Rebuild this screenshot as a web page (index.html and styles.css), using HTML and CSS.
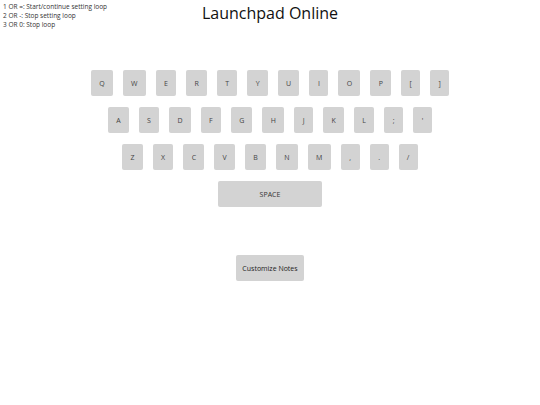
FILE: index.html
```html
<!DOCTYPE html>
<html>
<head>
<meta charset="utf-8">
<title>Launchpad Online</title>
<link rel="stylesheet" href="styles.css">
</head>
<body>
<header class="header">
  <div class="help">
    <div>1 OR =: Start/continue setting loop</div>
    <div>2 OR -: Stop setting loop</div>
    <div>3 OR 0: Stop loop</div>
  </div>
  <h1 class="title">Launchpad Online</h1>
  <div></div>
</header>
<main class="keyboard">
  <div class="row">
    <button class="key">Q</button><button class="key">W</button><button class="key">E</button><button class="key">R</button><button class="key">T</button><button class="key">Y</button><button class="key">U</button><button class="key">I</button><button class="key">O</button><button class="key">P</button><button class="key">[</button><button class="key">]</button>
  </div>
  <div class="row">
    <button class="key">A</button><button class="key">S</button><button class="key">D</button><button class="key">F</button><button class="key">G</button><button class="key">H</button><button class="key">J</button><button class="key">K</button><button class="key">L</button><button class="key">;</button><button class="key">'</button>
  </div>
  <div class="row">
    <button class="key">Z</button><button class="key">X</button><button class="key">C</button><button class="key">V</button><button class="key">B</button><button class="key">N</button><button class="key">M</button><button class="key">,</button><button class="key">.</button><button class="key">/</button>
  </div>
  <div class="row">
    <button class="key space">SPACE</button>
  </div>
</main>
<div class="actions">
  <button class="custom">Customize Notes</button>
</div>
</body>
</html>
```
FILE: styles.css
```css
html, body {
  margin: 0;
  padding: 0;
  background: #ffffff;
  font-family: "Open Sans", "Noto Sans", sans-serif;
  color: #222;
}
.header {
  display: grid;
  grid-template-columns: 1fr auto 1fr;
  align-items: start;
}
.help {
  padding: 2px 0 0 3px;
  font-size: 6.5px;
  line-height: 9px;
  color: #333;
}
.title {
  margin: 3px 0 0 0;
  font-size: 16px;
  font-weight: 400;
  line-height: 20px;
  color: #111;
}
.keyboard {
  display: flex;
  flex-direction: column;
  align-items: center;
  gap: 11px;
  margin-top: 41px;
}
.row {
  display: flex;
  justify-content: center;
  gap: 10px;
}
.key, .custom {
  border: none;
  border-radius: 2px;
  background: #d3d3d3;
  color: #444;
  font-family: "Open Sans", "Noto Sans", sans-serif;
  font-size: 7px;
  height: 26px;
  padding: 0 8.25px;
  min-width: 19px;
  cursor: pointer;
}
.space {
  width: 104px;
  color: #333;
}
.actions {
  display: flex;
  justify-content: center;
  margin-top: 48px;
}
.custom {
  width: 68px;
  padding: 0;
  color: #222;
}
```
